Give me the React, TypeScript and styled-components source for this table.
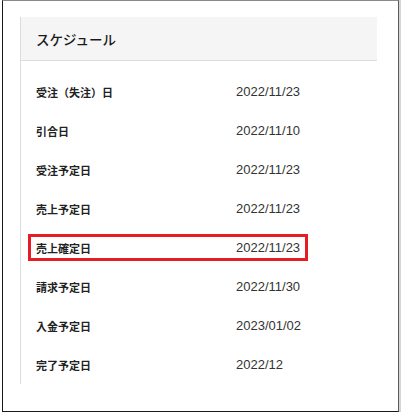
import React from 'react';
import styled, { createGlobalStyle } from 'styled-components';

const GlobalStyle = createGlobalStyle`
    body {
        margin: 0;
        background: #ffffff;
        font-family: 'Liberation Sans', 'Noto Sans CJK JP', sans-serif;
    }
`;

interface IScheduleItem {
    label: string;
    date: string;
    highlighted?: boolean;
}

const items: IScheduleItem[] = [
    { label: '受注（失注）日', date: '2022/11/23' },
    { label: '引合日', date: '2022/11/10' },
    { label: '受注予定日', date: '2022/11/23' },
    { label: '売上予定日', date: '2022/11/23' },
    { label: '売上確定日', date: '2022/11/23', highlighted: true },
    { label: '請求予定日', date: '2022/11/30' },
    { label: '入金予定日', date: '2023/01/02' },
    { label: '完了予定日', date: '2022/12' },
];

export default function App() {
    return (
        <>
            <GlobalStyle />
            <Frame>
                <Card>
                    <CardHeader>スケジュール</CardHeader>
                    <RowList>
                        {items.map((item) => (
                            <Row key={item.label} $highlighted={item.highlighted}>
                                <span className="label">{item.label}</span>
                                <span className="date">{item.date}</span>
                            </Row>
                        ))}
                    </RowList>
                </Card>
            </Frame>
        </>
    );
}

const Frame = styled.div`
    box-sizing: border-box;
    width: 397px;
    height: 412px;
    margin-left: 2px;
    border-top: 1px solid #8a8a8a;
    border-left: 1px solid #1a1a1a;
    border-bottom: 1px solid #1a1a1a;
    border-right: 1px solid #5a5a5a;
    box-shadow: 2px 0 0 #d6d6d6;
    padding: 16px 0 0 17px;
`;

const Card = styled.section`
    width: 357px;
    box-sizing: border-box;
    border-left: 1px solid #dcdcdc;
`;

const CardHeader = styled.h2`
    margin: 0;
    height: 43px;
    display: flex;
    align-items: center;
    padding-left: 15px;
    background: #f5f5f5;
    border-bottom: 1px solid #dddddd;
    font-family: 'Noto Sans CJK JP', sans-serif;
    font-size: 13.5px;
    font-weight: 500;
    color: #1a1a1a;
`;

const RowList = styled.div`
    padding: 11px 0 0;
    height: 312px;
`;

const Row = styled.div<{ $highlighted?: boolean }>`
    position: relative;
    display: grid;
    grid-template-columns: 200px 1fr;
    align-items: center;
    height: 39px;
    padding-left: 15px;

    .label {
        font-family: 'Noto Sans CJK JP', sans-serif;
        font-size: 11px;
        font-weight: 700;
        color: #222222;
    }

    .date {
        font-size: 13px;
        color: #333333;
    }

    &::after {
        content: '';
        display: ${(p) => (p.$highlighted ? 'block' : 'none')};
        position: absolute;
        left: 7px;
        top: 6px;
        width: 280px;
        height: 27px;
        box-sizing: border-box;
        border: 3px solid #e81c24;
    }
`;
